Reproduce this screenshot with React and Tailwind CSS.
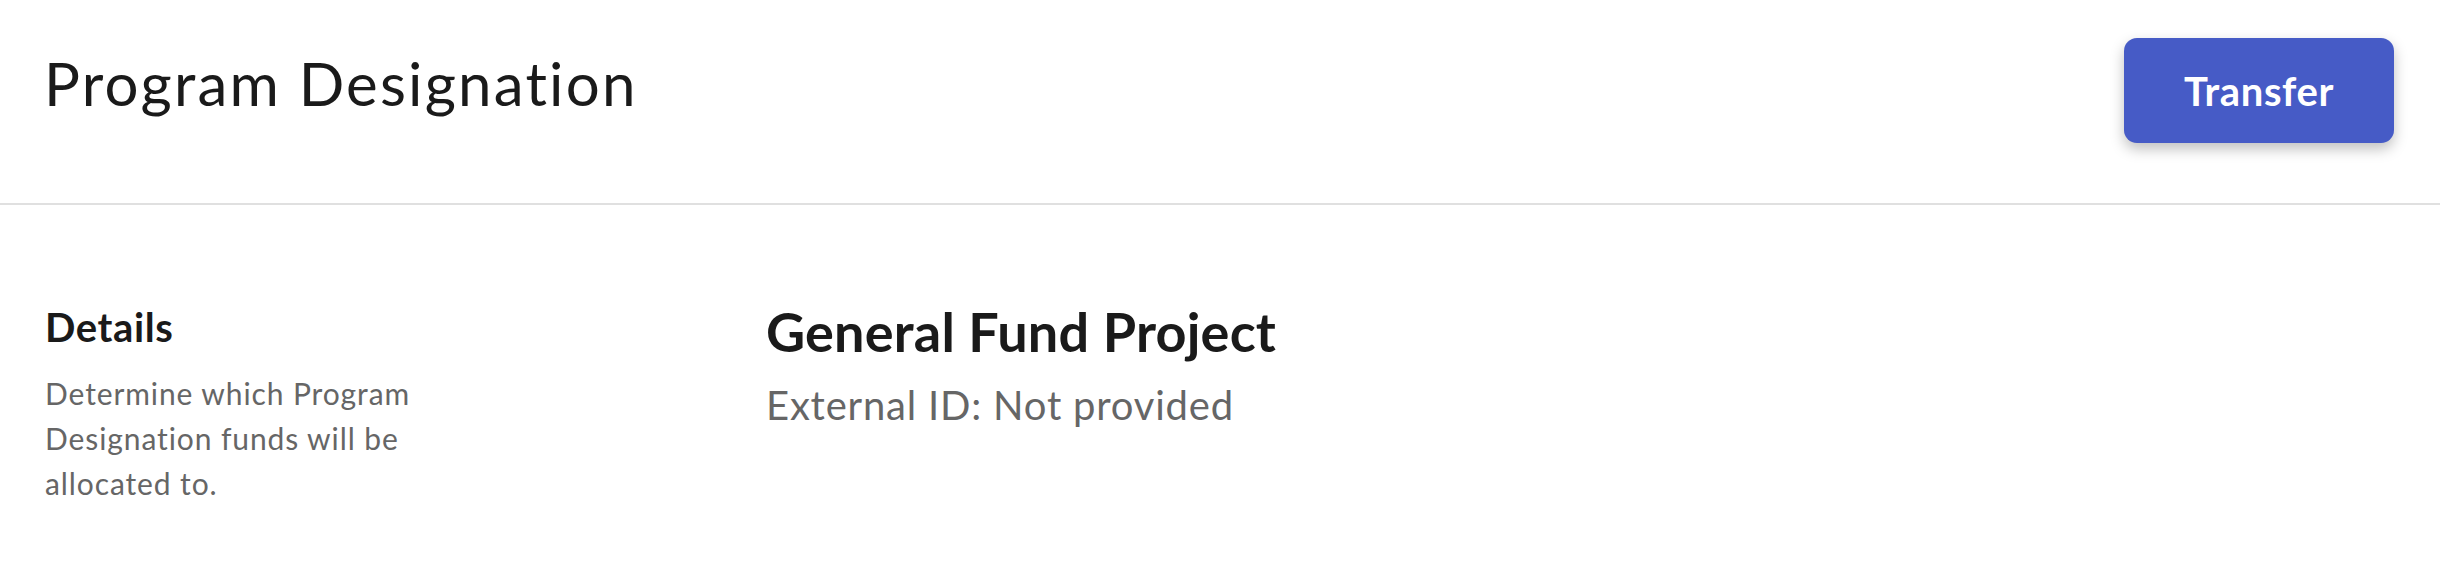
export default function App() {
  return (
    <div className="min-h-[578px] bg-white text-[#1a1a1a] font-['Lato',_'Open_Sans',_sans-serif] [font-variant-ligatures:none]">
      {/* Header */}
      <div className="h-[205px] flex items-start justify-between px-[46px] pt-[38px] border-b-2 border-[#e0e0e0]">
        <h1 className="mt-[9px] -ml-[2px] text-[60px] leading-[72px] font-normal tracking-[2.2px]">Program Designation</h1>
        <button className="w-[270px] h-[105px] rounded-[13px] bg-[#465bc6] text-white text-[40px] font-bold tracking-[0.6px] shadow-[0_6px_14px_rgba(0,0,0,0.25)]">
          Transfer
        </button>
      </div>

      {/* Body */}
      <div className="flex pt-[98px] px-[45px]">
        <div className="w-[721px] shrink-0">
          <h2 className="text-[40px] leading-[48px] font-bold tracking-[0.6px]">Details</h2>
          <p className="mt-[20px] w-[440px] text-[30px] leading-[45px] text-[#666666] tracking-[0.9px]">
            Determine which Program Designation funds will be allocated to.
          </p>
        </div>
        <div className="-mt-[3px]">
          <h3 className="text-[54px] leading-[64px] font-bold tracking-[0.2px]">General Fund Project</h3>
          <p className="mt-[17px] text-[40px] leading-[48px] text-[#666666] tracking-[0.8px]">External ID: Not provided</p>
        </div>
      </div>
    </div>
  );
}
